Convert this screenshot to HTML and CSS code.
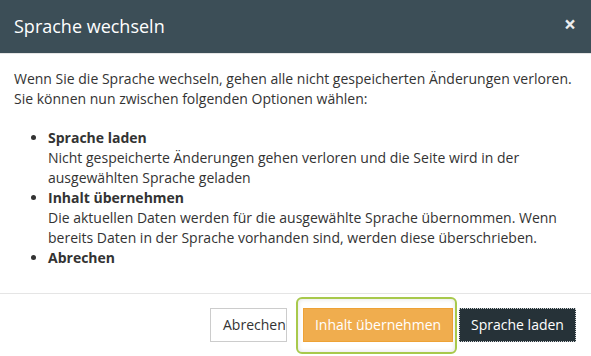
FILE: index.html
```html
<!DOCTYPE html>
<html lang="de">
<head>
<meta charset="utf-8">
<title>Sprache wechseln</title>
<link rel="stylesheet" href="styles.css">
</head>
<body>
<div class="modal">
  <div class="modal-header">
    <h4 class="modal-title">Sprache wechseln</h4>
    <button class="close" type="button">×</button>
  </div>
  <div class="modal-body">
    <p>Wenn Sie die Sprache wechseln, gehen alle nicht gespeicherten Änderungen verloren. Sie können nun zwischen folgenden Optionen wählen:</p>
    <ul>
      <li><strong>Sprache laden</strong><br>Nicht gespeicherte Änderungen gehen verloren und die Seite wird in der ausgewählten Sprache geladen</li>
      <li><strong>Inhalt übernehmen</strong><br>Die aktuellen Daten werden für die ausgewählte Sprache übernommen. Wenn bereits Daten in der Sprache vorhanden sind, werden diese überschrieben.</li>
      <li><strong>Abrechen</strong></li>
    </ul>
  </div>
  <div class="modal-footer">
    <button class="btn btn-default" type="button">Abrechen</button>
    <span class="highlight">
      <button class="btn btn-warning" type="button">Inhalt übernehmen</button>
      <span class="ring"></span>
    </span>
    <button class="btn btn-dark" type="button">Sprache laden</button>
  </div>
</div>
</body>
</html>
```

FILE: styles.css
```css
* { box-sizing: border-box; }
html, body { margin: 0; padding: 0; background: #fff; }
body {
  font-family: "Open Sans", "Liberation Sans", sans-serif;
  font-size: 14px;
  line-height: 20px;
  color: #333;
}
.modal { width: 591px; height: 356px; overflow: hidden; }
.modal-header {
  background: #3c4e57;
  border-bottom: 1px solid #e5e5e5;
  height: 54px;
  padding: 0 15px 0 14px;
  display: flex;
  align-items: center;
  justify-content: space-between;
}
.modal-title {
  margin: 0;
  font-size: 18px;
  font-weight: 400;
  line-height: 25px;
  color: #fff;
}
.close {
  background: none;
  border: 0;
  padding: 0;
  margin-top: -4px;
  color: #fff;
  font-family: "Open Sans", "Liberation Sans", sans-serif;
  font-size: 21px;
  font-weight: 700;
  line-height: 1;
  opacity: .9;
}
.modal-body { padding: 15px 15px 15px 14px; }
.modal-body p { margin: 0 0 19px; }
.modal-body ul { margin: 0 0 10px; padding-left: 34px; }
.modal-body strong { font-weight: 700; }
.modal-footer {
  border-top: 1px solid #e5e5e5;
  padding: 14px 15px 15px;
  display: flex;
  justify-content: flex-end;
  align-items: center;
}
.btn {
  font-family: "Open Sans", "Liberation Sans", sans-serif;
  font-size: 14px;
  line-height: 20px;
  padding: 6px 0;
  border: 1px solid transparent;
  border-radius: 0;
  margin: 0;
  white-space: nowrap;
  text-align: center;
  overflow: visible;
}
.btn-default {
  background: #fff;
  border-color: #ccc;
  color: #333;
  width: 77px;
  padding-left: 12px;
  text-align: left;
  margin-right: 16px;
}
.btn-warning { background: #f0ad4e; border-color: #eea236; color: #fff; width: 150px; }
.btn-dark {
  background: #263238;
  border: 1px dotted #d0d4d6;
  color: #fff;
  width: 117px;
}
.highlight { position: relative; display: inline-block; margin-right: 6px; }
.highlight .btn { display: block; }
.ring {
  position: absolute;
  top: -11px;
  bottom: -12px;
  left: -7px;
  right: -4px;
  border: 2px solid #a8c94c;
  border-radius: 6px;
  box-shadow: inset 0 0 5px rgba(0, 0, 0, .12);
  pointer-events: none;
}
```
